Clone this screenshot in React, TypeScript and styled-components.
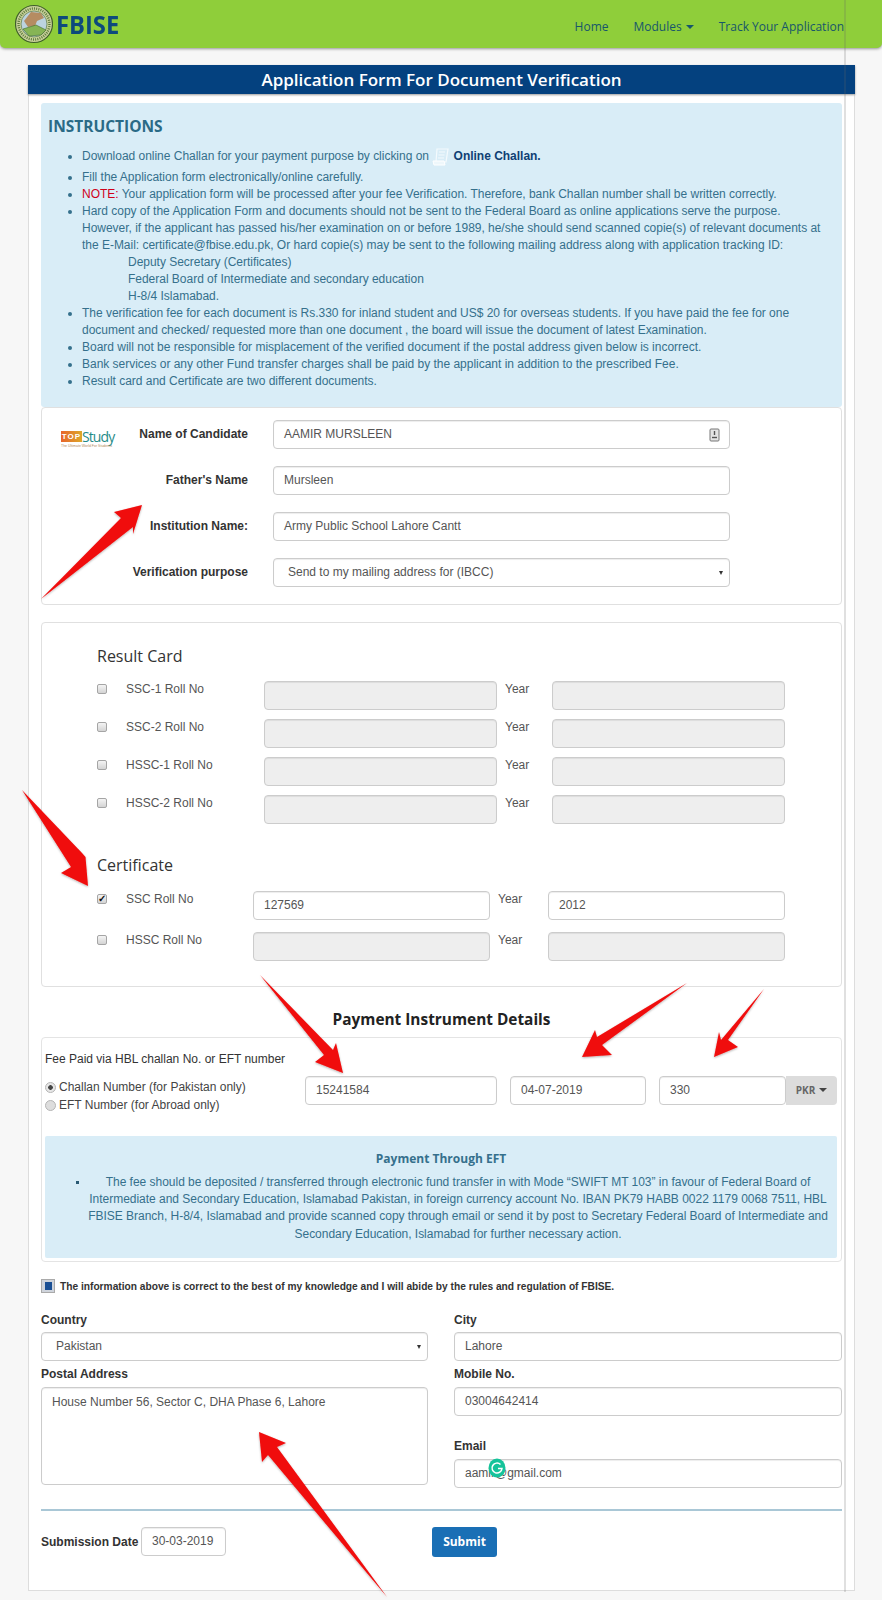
import React from "react";
import styled, { createGlobalStyle } from "styled-components";

const Global = createGlobalStyle`
  html, body { margin: 0; padding: 0; background: #f7f7f7; }
  body { font-family: "Liberation Sans", Arial, sans-serif; font-size: 12px; color: #333; }
  * { box-sizing: border-box; }
`;
const Page = styled.div`position: relative; width: 882px; height: 1600px; overflow: hidden;`;
const Nav = styled.nav`
  height: 48px; background: #8fce3a; border-radius: 0 0 5px 5px; box-shadow: 0 1px 3px rgba(0,0,0,.4);
  display: flex; align-items: center; padding-left: 15px; font-family: "Open Sans", sans-serif;
`;
const Brand = styled.div`font-weight: 700; font-size: 25px; color: #0d4a7c; margin-left: 3px; line-height: 1; transform: scaleX(.95); transform-origin: left;`;
const NavLinks = styled.div`margin-left: auto; display: flex; gap: 25px; padding-right: 38px; font-size: 12px; color: #17566b; margin-top: 4px;`;
const Caret = styled.span<{ $color?: string }>`display: inline-block; border-top: 4px solid ${p => p.$color ?? "#17566b"}; border-left: 4px solid transparent; border-right: 4px solid transparent; margin-left: 4px; vertical-align: 2px;`;
const Container = styled.main`
  margin: 17px 28px 0 28px; width: 827px; height: 1526px; background: #fff; border: 1px solid #ddd; border-top: 0;
`;
const Title = styled.h1`
  margin: 0 -1px; height: 29px; background: #04417f; color: #fff; font: 600 17px/29px "Open Sans", sans-serif; text-align: center;
  box-shadow: 0 1px 2px rgba(0,0,0,.4);
`;
const Inner = styled.div`margin: 9px 12px 0 12px; width: 801px;`;
const Alert = styled.section`background: #d9edf7; border-radius: 3px; color: #35708c; height: 304px; padding: 12px 7px 0 7px;`;
const AlertTitle = styled.h3`margin: 0 0 6px; font: 700 15.5px/22px "Open Sans", sans-serif; color: #2a6a86;`;
const List = styled.ul`margin: 0; padding: 0 10px 0 34px; line-height: 17px; font-size: 12px; letter-spacing: -.02px; li { padding: 0; }`;
const FirstItem = styled.li`line-height: 26px;`;
const Note = styled.span`color: #d0021b;`;
const ChallanLink = styled.b`color: #0f3f73;`;
const Address = styled.div`padding-left: 46px;`;
const Panel = styled.section<{ $h: number; $mt?: number }>`
  height: ${p => p.$h}px; margin-top: ${p => p.$mt ?? 0}px; border: 1px solid #e0e0e0; border-radius: 4px; background: #fff; position: relative;
`;
const FormRows = styled.div`display: grid; grid-template-columns: 206px 457px; grid-auto-rows: 29px; column-gap: 25px; row-gap: 17px; padding: 12px 0 0 0;`;
const RowLabel = styled.label`font-weight: 700; font-size: 12px; text-align: right; color: #333; line-height: 29px;`;
const LabelWithLogo = styled(RowLabel)`display: flex; justify-content: space-between; align-items: flex-start;`;
const Logo = styled.div`margin: 10px 0 0 19px; width: 54px; height: 19px; line-height: 1;`;
const LogoTop = styled.div`display: flex; align-items: center; height: 13px;`;
const LogoBox = styled.span`background: linear-gradient(90deg,#e8642a,#dca82a); color: #fff; font: 700 8px/11px "Liberation Sans", sans-serif; width: 21px; height: 11px; text-align: center; letter-spacing: 1px;`;
const LogoStudy = styled.span`color: #1f8b88; font: 400 14px/13px "Open Sans", sans-serif; letter-spacing: -.9px;`;
const LogoTag = styled.div`font: 400 3.5px/4px "Liberation Sans", sans-serif; color: #b08a5a; white-space: nowrap; margin-top: 1px; text-align: left;`;
const Field = styled.div<{ $disabled?: boolean }>`
  height: 29px; border: 1px solid #ccc; border-radius: 4px; background: ${p => p.$disabled ? "#eee" : "#fff"};
  box-shadow: inset 0 1px 1px rgba(0,0,0,.075); color: #555; font-size: 12px; line-height: 27px; padding: 0 10px; position: relative;
  white-space: nowrap;
`;
const SelectField = styled(Field)`padding-left: 14px;`;
const SelectArrow = styled.span`position: absolute; right: 6px; top: 12px; border-top: 4px solid #333; border-left: 2.5px solid transparent; border-right: 2.5px solid transparent;`;
const Badge = styled.svg`position: absolute; right: 9px; top: 7px;`;
const Heading = styled.h4`margin: 0; font: 400 16px/22px "Open Sans", sans-serif; color: #333;`;
const RollSection = styled.div<{ $pt: number }>`padding: ${p => p.$pt}px 0 0 55px;`;
const RollGrid = styled.div<{ $first: number; $gap: number; $yearGap: number; $last: number; $rowGap: number; $mt: number }>`
  display: grid; grid-template-columns: 29px ${p => p.$first}px ${p => p.$gap}px ${p => p.$yearGap}px ${p => p.$last}px;
  row-gap: ${p => p.$rowGap}px; margin-top: ${p => p.$mt}px;
`;
const Roll = styled.div`display: contents;`;
const Check = styled.span`
  width: 10px; height: 10px; margin-top: 3px; border: 1px solid #a5a5a5; border-radius: 2px; background: linear-gradient(#f4f4f4,#d4d4d4);
  display: block; position: relative; color: #111; font-size: 10px; font-weight: 700; line-height: 8px; text-align: center;
`;
const RollLabel = styled.span`font-size: 12px; color: #555; line-height: 16px;`;
const YearLabel = styled.span`font-size: 12px; color: #555; line-height: 16px; padding-left: 8px;`;
const PayHeading = styled.h3`margin: 0; padding-top: 23px; height: 50px; text-align: center; font: 700 15.4px/20px "Open Sans", sans-serif; color: #222;`;
const PayPanel = styled.section`height: 225px; border: 1px solid #e4e4e4; border-radius: 4px; padding: 13px 4px 0 3px;`;
const PayLabel = styled.div`font-size: 12px; line-height: 17px; color: #333; height: 25px;`;
const PayRow = styled.div`display: flex; height: 60px;`;
const Radios = styled.div`width: 260px; color: #444; line-height: 18px; font-size: 12px; padding-top: 2px;`;
const RadioRow = styled.div`display: flex; align-items: center; gap: 3px;`;
const Radio = styled.span<{ $on?: boolean }>`
  width: 11px; height: 11px; border-radius: 50%; border: 1px solid #b5b5b5; background: ${p => p.$on ? "radial-gradient(circle,#444 0 2px,#e6e6e6 2.6px)" : "#ddd"};
`;
const SizedField = styled(Field)<{ $w: number; $ml: number }>`width: ${p => p.$w}px; margin-left: ${p => p.$ml}px; flex: none;`;
const Pkr = styled.div`
  width: 51px; height: 29px; background: #dcdcdc; border-radius: 0 4px 4px 0; font: 700 10px/29px "Open Sans", sans-serif; color: #666; text-align: center;
`;
const EftBox = styled.div`height: 122px; background: #d9edf7; border-radius: 2px; color: #35708c; text-align: center; padding: 15px 8px 0 8px; position: relative; font-size: 12px; line-height: 17.2px;`;
const EftTitle = styled.div`font-weight: 700; margin-bottom: 8px; line-height: 15px; font-family: "Open Sans", sans-serif; font-size: 12px;`;
const EftBody = styled.div`padding-left: 34px; letter-spacing: -.02px;`;
const EftBullet = styled.span`position: absolute; left: 31px; top: 45px; width: 3px; height: 3px; background: #2a5a74;`;
const Agree = styled.div`display: flex; align-items: center; gap: 5px; height: 16px; margin-top: 16px; font-weight: 700; font-size: 10.2px; color: #333;`;
const AgreeBox = styled.span`width: 14px; height: 14px; background: #cfd4dc; border: 1px solid #aaa; display: flex; align-items: center; justify-content: center; &::after { content: ""; width: 7px; height: 8px; background: #1a4f94; }`;
const Cols = styled.div`display: grid; grid-template-columns: 387px 388px; column-gap: 26px; margin-top: 18px;`;
const Col = styled.div`display: flex; flex-direction: column;`;
const ColLabel = styled.label<{ $mt?: number; $mb?: number }>`font-weight: 700; font-size: 12px; line-height: 17px; color: #333; margin: ${p => p.$mt ?? 0}px 0 ${p => p.$mb ?? 4}px;`;
const TextArea = styled(Field)`height: 98px; line-height: 16px; padding: 6px 10px; position: relative;`;
const Hr = styled.hr`border: 0; height: 2px; background: #a9c7d6; margin: 21px 0 0 0;`;
const SubmitRow = styled.div`display: flex; align-items: center; margin-top: 16px; height: 29px;`;
const DateLabel = styled.label`font-weight: 700; font-size: 12px; width: 100px; white-space: nowrap;`;
const DateField = styled(Field)`width: 85px;`;
const Submit = styled.button`margin-left: 206px; width: 65px; height: 30px; border: 0; border-radius: 3px; background: #1a6fb5; color: #fff; font: 700 12px/30px "Open Sans", sans-serif; padding: 0;`;
const Overlay = styled.svg`position: absolute; left: 0; top: 0; pointer-events: none;`;
const Grammarly = styled.svg`position: absolute; left: 488px; top: 1458px;`;
const Guide = styled.div`position: absolute; left: 844px; top: 0; height: 1592px; width: 2px; background: rgba(100,100,100,.2);`;
const SealWrap = styled.svg`flex: none;`;

const rolls1 = ["SSC-1 Roll No", "SSC-2 Roll No", "HSSC-1 Roll No", "HSSC-2 Roll No"];
const arrows = [
  "M142 505 L114 512 L121 518 L41 599 L133 527 L133 534 Z",
  "M88 886 L61 873 L71 867 L22 790 L82 853 L85.5 857 Z",
  "M343 1073 L315 1062 L324 1055 L260 975 L333 1050 L336 1043 Z",
  "M582 1057 L612 1055 L602 1045 L687 983 L597 1037 L595 1030 Z",
  "M714 1057 L738 1047 L728 1040 L764 989 L721 1040 L719 1032 Z",
  "M259 1432 L286 1443 L277 1447 L387 1597 L268 1455 L262 1462 Z",
];

export default function App() {
  return (
    <Page>
      <Global />
      <Nav>
        <SealWrap width="38" height="40" viewBox="0 0 38 40">
          <circle cx="19" cy="20" r="18.5" fill="#c8cf9a" stroke="#3f5f2a" strokeWidth="1.2" />
          <circle cx="19" cy="20" r="15.5" fill="none" stroke="#5a7a3a" strokeWidth="2.4" strokeDasharray="1 1.2" />
          <circle cx="19" cy="20" r="13" fill="#bcd3df" stroke="#4c6b2a" strokeWidth=".6" />
          <path d="M9 17 L16 8 L26 9 L29 14 L22 17 L20 22 L13 23 Z" fill="#b58c62" />
          <path d="M8 25 L21 21 L31 26 L26 31 L14 32 Z" fill="#86b455" stroke="#3f6b2a" strokeWidth=".6" />
        </SealWrap>
        <Brand>FBISE</Brand>
        <NavLinks>
          <span>Home</span>
          <span>Modules<Caret /></span>
          <span>Track Your Application</span>
        </NavLinks>
      </Nav>
      <Container>
        <Title>Application Form For Document Verification</Title>
        <Inner>
          <Alert>
            <AlertTitle>INSTRUCTIONS</AlertTitle>
            <List>
              <FirstItem>
                Download online Challan for your payment purpose by clicking on{" "}
                <svg width="18" height="20" viewBox="0 0 18 20" style={{ verticalAlign: "middle" }}>
                  <path d="M5 2h11l-2 13H4z" fill="none" stroke="#f4fafd" strokeWidth="1.2" />
                  <path d="M1 14h11l1 4H2z" fill="#eef7fb" stroke="#fff" />
                  <path d="M7 5h6M6.5 8h6M6 11h6" stroke="#f4fafd" />
                </svg>{" "}
                <ChallanLink>Online Challan.</ChallanLink>
              </FirstItem>
              <li>Fill the Application form electronically/online carefully.</li>
              <li><Note>NOTE:</Note> Your application form will be processed after your fee Verification. Therefore, bank Challan number shall be written correctly.</li>
              <li>
                Hard copy of the Application Form and documents should not be sent to the Federal Board as online applications serve the purpose. However, if the applicant has passed his/her examination on or before 1989, he/she should send scanned copie(s) of relevant documents at the E-Mail: certificate@fbise.edu.pk, Or hard copie(s) may be sent to the following mailing address along with application tracking ID:
                <Address>Deputy Secretary (Certificates)</Address>
                <Address>Federal Board of Intermediate and secondary education</Address>
                <Address>H-8/4 Islamabad.</Address>
              </li>
              <li>The verification fee for each document is Rs.330 for inland student and US$ 20 for overseas students. If you have paid the fee for one document and checked/ requested more than one document , the board will issue the document of latest Examination.</li>
              <li>Board will not be responsible for misplacement of the verified document if the postal address given below is incorrect.</li>
              <li>Bank services or any other Fund transfer charges shall be paid by the applicant in addition to the prescribed Fee.</li>
              <li>Result card and Certificate are two different documents.</li>
            </List>
          </Alert>
          <Panel $h={198}>
            <FormRows>
              <LabelWithLogo>
                <Logo>
                  <LogoTop><LogoBox>TOP</LogoBox><LogoStudy>Study</LogoStudy></LogoTop>
                  <LogoTag>The Ultimate World For Students</LogoTag>
                </Logo>
                Name of Candidate
              </LabelWithLogo>
              <Field>AAMIR MURSLEEN
                <Badge width="11" height="14" viewBox="0 0 11 14"><rect x="1" y="1" width="9" height="12" rx="1" fill="#e4e4e4" stroke="#777" /><path d="M5.5 3v4" stroke="#555" strokeWidth="1.4" /><path d="M3 9.5h5" stroke="#555" strokeWidth="1.4" /></Badge>
              </Field>
              <RowLabel>Father's Name</RowLabel>
              <Field>Mursleen</Field>
              <RowLabel>Institution Name:</RowLabel>
              <Field>Army Public School Lahore Cantt</Field>
              <RowLabel>Verification purpose</RowLabel>
              <SelectField>Send to my mailing address for (IBCC)<SelectArrow /></SelectField>
            </FormRows>
          </Panel>
          <Panel $h={365} $mt={17}>
            <RollSection $pt={22}>
              <Heading>Result Card</Heading>
              <RollGrid $first={138} $gap={233} $yearGap={55} $last={233} $rowGap={9} $mt={14}>
                {rolls1.map(r => (
                  <Roll key={r}>
                    <Check />
                    <RollLabel>{r}</RollLabel>
                    <Field $disabled />
                    <YearLabel>Year</YearLabel>
                    <Field $disabled />
                  </Roll>
                ))}
              </RollGrid>
            </RollSection>
            <RollSection $pt={30}>
              <Heading>Certificate</Heading>
              <RollGrid $first={127} $gap={237} $yearGap={58} $last={237} $rowGap={12} $mt={15}>
                <Roll>
                  <Check>✓</Check>
                  <RollLabel>SSC Roll No</RollLabel>
                  <Field>127569</Field>
                  <YearLabel>Year</YearLabel>
                  <Field>2012</Field>
                </Roll>
                <Roll>
                  <Check />
                  <RollLabel>HSSC Roll No</RollLabel>
                  <Field $disabled />
                  <YearLabel>Year</YearLabel>
                  <Field $disabled />
                </Roll>
              </RollGrid>
            </RollSection>
          </Panel>
          <PayHeading>Payment Instrument Details</PayHeading>
          <PayPanel>
            <PayLabel>Fee Paid via HBL challan No. or EFT number</PayLabel>
            <PayRow>
              <Radios>
                <RadioRow><Radio $on />Challan Number (for Pakistan only)</RadioRow>
                <RadioRow><Radio />EFT Number (for Abroad only)</RadioRow>
              </Radios>
              <SizedField $w={192} $ml={0}>15241584</SizedField>
              <SizedField $w={136} $ml={13}>04-07-2019</SizedField>
              <SizedField $w={127} $ml={13}>330</SizedField>
              <Pkr>PKR<Caret $color="#444" /></Pkr>
            </PayRow>
            <EftBox>
              <EftBullet />
              <EftTitle>Payment Through EFT</EftTitle>
              <EftBody>The fee should be deposited / transferred through electronic fund transfer in with Mode “SWIFT MT 103” in favour of Federal Board of Intermediate and Secondary Education, Islamabad Pakistan, in foreign currency account No. IBAN PK79 HABB 0022 1179 0068 7511, HBL FBISE Branch, H-8/4, Islamabad and provide scanned copy through email or send it by post to Secretary Federal Board of Intermediate and Secondary Education, Islamabad for further necessary action.</EftBody>
            </EftBox>
          </PayPanel>
          <Agree><AgreeBox />The information above is correct to the best of my knowledge and I will abide by the rules and regulation of FBISE.</Agree>
          <Cols>
            <Col>
              <ColLabel $mb={3}>Country</ColLabel>
              <SelectField>Pakistan<SelectArrow /></SelectField>
              <ColLabel $mt={5}>Postal Address</ColLabel>
              <TextArea>House Number 56, Sector C, DHA Phase 6, Lahore</TextArea>
            </Col>
            <Col>
              <ColLabel $mb={3}>City</ColLabel>
              <Field>Lahore</Field>
              <ColLabel $mt={5}>Mobile No.</ColLabel>
              <Field>03004642414</Field>
              <ColLabel $mt={22}>Email</ColLabel>
              <Field>aamir@gmail.com</Field>
            </Col>
          </Cols>
          <Hr />
          <SubmitRow>
            <DateLabel>Submission Date</DateLabel>
            <DateField>30-03-2019</DateField>
            <Submit>Submit</Submit>
          </SubmitRow>
        </Inner>
      </Container>
      <Guide />
      <Overlay width="882" height="1600" viewBox="0 0 882 1600">
        <defs>
          <filter id="s" x="-10%" y="-10%" width="120%" height="120%"><feDropShadow dx="0" dy="1" stdDeviation="1" floodColor="#000" floodOpacity=".3" /></filter>
        </defs>
        {arrows.map(d => <path key={d} d={d} fill="#f00a0a" filter="url(#s)" />)}
      </Overlay>
      <Grammarly width="18" height="20" viewBox="0 0 18 20">
        <ellipse cx="9" cy="10" rx="8.5" ry="9.5" fill="#15c39a" />
        <path d="M12.5 6.5A5 5 0 1 0 14 10.5H10" fill="none" stroke="#fff" strokeWidth="1.5" />
      </Grammarly>
    </Page>
  );
}
